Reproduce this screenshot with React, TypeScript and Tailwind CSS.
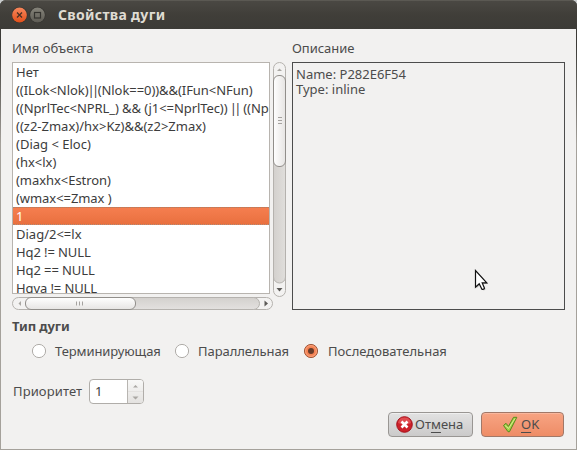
import React from "react";

const SELECTED_ROW = 8;

const rows = [
  { text: "Нет", cls: "" },
  { text: "((ILok<Nlok)||(Nlok==0))&&(IFun<NFun)", cls: "tracking-[-0.06px]" },
  { text: "((NprlTec<NPRL_) && (j1<=NprlTec)) || ((NprlTec", cls: "tracking-[-0.08px]" },
  { text: "((z2-Zmax)/hx>Kz)&&(z2>Zmax)", cls: "" },
  { text: "(Diag < Eloc)", cls: "" },
  { text: "(hx<lx)", cls: "" },
  { text: "(maxhx<Estron)", cls: "tracking-[-0.05px]" },
  { text: "(wmax<=Zmax )", cls: "tracking-[-0.06px]" },
  { text: "1", cls: "" },
  { text: "Diag/2<=lx", cls: "" },
  { text: "Hq2 != NULL", cls: "tracking-[-0.1px]" },
  { text: "Hq2 == NULL", cls: "tracking-[-0.1px]" },
  { text: "Hqva != NULL", cls: "tracking-[-0.1px]" },
];

function RowText({ text }: { text: string }) {
  const [before, after] = text.split("||");
  if (after === undefined) return <>{text}</>;
  return (
    <>
      {before}
      <span className="-ml-px tracking-[-2.6px]">||</span>
      <span className="ml-[1px]">{after}</span>
    </>
  );
}

function TitleBar() {
  return (
    <header className="flex h-[29px] shrink-0 items-center rounded-t-[6px] border-t border-[#5b5953] bg-linear-to-b from-[#4a4843] via-[#403e39] to-[#3c3b37] pl-3">
      <svg width="34" height="17" viewBox="0 0 34 17" className="shrink-0">
        <defs>
          <linearGradient id="close" x1="0" y1="0" x2="0" y2="1">
            <stop offset="0" stopColor="#f7875c" />
            <stop offset="1" stopColor="#e2501b" />
          </linearGradient>
          <linearGradient id="max" x1="0" y1="0" x2="0" y2="1">
            <stop offset="0" stopColor="#85837a" />
            <stop offset="1" stopColor="#5e5c55" />
          </linearGradient>
        </defs>
        <circle cx="7.5" cy="8" r="8" fill="#34332f" />
        <circle cx="25.5" cy="8" r="8" fill="#34332f" />
        <circle cx="7.5" cy="8" r="7.400" fill="url(#close)" />
        <circle cx="25.5" cy="8" r="7.400" fill="url(#max)" />
        <path d="M5 5.500l5 5M10 5.500l-5 5" stroke="#493024" strokeWidth="1.300" />
        <rect x="22.5" y="5.500" width="6" height="5.500" fill="none" stroke="#34332f" strokeWidth="1.200" />
      </svg>
      <h1 className="ml-3 text-[14px] leading-[18px] font-bold tracking-[0.32px] text-[#dfdbd2]">Свойства дуги</h1>
    </header>
  );
}

function ObjectList() {
  return (
    <div className="h-[232px] w-[258px] overflow-hidden border border-[#b8b4af] bg-white text-[#3c3c3c]">
      {rows.map((r, i) => (
        <div
          key={i}
          className={
            i === SELECTED_ROW
              ? "h-[18px] border-y border-dotted border-[#a9836f] bg-linear-to-b from-[#f57e4f] to-[#e9703f] pl-[3px] leading-[16px] whitespace-pre text-white"
              : "h-[18px] pl-[3px] leading-[18px] whitespace-pre"
          }
        >
          <span className={r.cls}>
            <RowText text={r.text} />
          </span>
        </div>
      ))}
    </div>
  );
}

function VerticalScrollbar() {
  return (
    <svg width="14" height="236" viewBox="0 0 14 236" className="block">
      <defs>
        <linearGradient id="vthumb">
          <stop offset="0" stopColor="#fff" />
          <stop offset="1" stopColor="#e6e4e2" />
        </linearGradient>
        <linearGradient id="vtrack">
          <stop offset="0" stopColor="#d3d0cd" />
          <stop offset="1" stopColor="#e0dedb" />
        </linearGradient>
      </defs>
      <rect x=".5" y=".5" width="12" height="234" rx="6" fill="#f3f2f1" stroke="#b5b2ae" />
      <path d="M.5 20h12v195a6 6 0 0 1-12 0z" fill="url(#vtrack)" stroke="#b5b2ae" />
      <rect x=".5" y="13.500" width="12" height="91" rx="5.500" fill="url(#vthumb)" stroke="#918e8a" />
      <path d="M4 9L6.500 6.500L9 9z" fill="#aaa7a3" />
      <path d="M3.500 226h6L6.500 229.500z" fill="#5c5a57" />
      <path d="M5 55.500h4M5 58.500h4M5 61.500h4" stroke="#a5a29f" />
    </svg>
  );
}

function HorizontalScrollbar() {
  return (
    <svg width="262" height="13" viewBox="0 0 262 13" className="block">
      <defs>
        <linearGradient id="hthumb" x2="0" y2="1">
          <stop offset="0" stopColor="#fff" />
          <stop offset="1" stopColor="#e6e4e2" />
        </linearGradient>
        <linearGradient id="htrack" x2="0" y2="1">
          <stop offset="0" stopColor="#d3d0cd" />
          <stop offset="1" stopColor="#e3e1df" />
        </linearGradient>
      </defs>
      <rect x=".5" y=".5" width="260" height="12" rx="6" fill="#f3f2f1" stroke="#b5b2ae" />
      <path d="M100 .5h141.500a6 6 0 0 1 0 12H100z" fill="url(#htrack)" stroke="#b5b2ae" />
      <rect x="13.500" y=".5" width="110" height="12" rx="5.500" fill="url(#hthumb)" stroke="#918e8a" />
      <path d="M9 4L6.500 6.500L9 9z" fill="#aaa7a3" />
      <path d="M252.500 3.500v6L256 6.500z" fill="#5c5a57" />
      <path d="M64.500 4.500v4M67.500 4.500v4M70.500 4.500v4" stroke="#a5a29f" />
    </svg>
  );
}

function Radio({ checked = false }: { checked?: boolean }) {
  return (
    <svg width="16" height="16" viewBox="0 0 16 16" className="shrink-0">
      <circle cx="8" cy="8" r="6.600" fill={checked ? "#f48253" : "#fff"} stroke={checked ? "#a05a3d" : "#b0ada9"} />
      {checked && (
        <>
          <circle cx="8" cy="8" r="5.400" fill="none" stroke="#f9a27d" />
          <circle cx="8" cy="8" r="3" fill="#673b2a" />
        </>
      )}
    </svg>
  );
}

function Pointer() {
  return (
    <svg width="16" height="23" viewBox="0 0 16 23" className="absolute top-[206px] left-[181px]">
      <path
        d="M1.500 1.500v16.700l3.700-3.500 2.600 5.400c1 .5 2.300 0 2.700-.9l-2.300-5.300h4.600z"
        transform="translate(1 1)"
        fill="#000"
        opacity=".25"
      />
      <path d="M1.500 1.500v16.700l3.700-3.500 2.600 5.400c1 .5 2.300 0 2.700-.9l-2.300-5.300h4.600z" fill="#fff" stroke="#111" strokeWidth="1.200" />
    </svg>
  );
}

export default function App() {
  return (
    <div className="h-[450px] w-[577px] bg-[#c9cccd] font-['Noto_Sans','Open_Sans',sans-serif] text-[13px] text-[#4c4c4c]">
      <div className="flex h-full flex-col rounded-t-[6px] bg-linear-to-b from-[#3c3b37] from-[10%] to-[#a5a19b] to-[32%]">
        <TitleBar />
        <main className="mx-px mb-px flex grow flex-col bg-[#f2f1f0] pl-[11px]">
          <div className="flex gap-[5px]">
            <section className="w-[275px]">
              <h2 className="mt-[10px] h-[23px] leading-[18px]">Имя объекта</h2>
              <div className="flex h-[235px] gap-[3px]">
                <ObjectList />
                <VerticalScrollbar />
              </div>
              <HorizontalScrollbar />
            </section>
            <section>
              <h2 className="mt-[10px] h-[23px] leading-[18px] tracking-[-0.05px]">Описание</h2>
              <div className="relative h-[248px] w-[273px] border border-[#4c4c4c] px-[3px] pt-[4px] leading-[15px]">
                <p>Name: P282E6F54</p>
                <p>Type: inline</p>
                <Pointer />
              </div>
            </section>
          </div>
          <h2 className="mt-[7px] leading-[18px] font-bold tracking-[-0.1px]">Тип дуги</h2>
          <div className="mt-[8px] flex h-4 items-center pl-[19px] leading-4">
            <div className="flex w-[143px] items-center gap-2">
              <Radio />
              <span className="tracking-[-0.08px]">Терминирующая</span>
            </div>
            <div className="flex w-[129px] items-center gap-2">
              <Radio />
              <span className="tracking-[-0.06px]">Параллельная</span>
            </div>
            <div className="flex items-center gap-[9px]">
              <Radio checked />
              <span>Последовательная</span>
            </div>
          </div>
          <div className="mt-[20px] flex h-[25px] items-center">
            <span className="w-[77px] pl-px tracking-[0.12px]">Приоритет</span>
            <div className="flex h-[25px] w-[55px] overflow-hidden rounded-[4px] border border-[#b0ada9] bg-white">
              <span className="w-[38px] pl-[5px] leading-[23px] text-[#3c3c3c]">1</span>
              <span className="grow border-l border-[#b8b5b1] bg-linear-to-b from-[#f8f8f7] to-[#e4e2e0]">
                <svg width="15" height="23" viewBox="0 0 15 23">
                  <path d="M5 7.500L7.500 5L10 7.500zM4.500 16.500h6L7.500 19.500z" fill="#aaa7a3" />
                  <path d="M0 11.500h15" stroke="#e4e2e0" />
                </svg>
              </span>
            </div>
          </div>
          <div className="mt-[8px] flex gap-2 pl-[376px]">
            <button className="flex h-[25px] w-[85px] items-center rounded-[4px] border border-[#999693] bg-linear-to-b from-[#e2e2e2] to-[#cbcaca] pl-[7px] shadow-[inset_0_1px_0_#efefef]">
              <svg width="17" height="17" viewBox="0 0 17 17" className="shrink-0">
                <circle cx="8.500" cy="8.500" r="7.800" fill="#cc2029" stroke="#a40f1a" />
                <path d="M2 7a6.600 6.600 0 0 1 13 0q-6 3-13 0" fill="#ec6b6b" opacity=".6" />
                <path d="M5.500 5.500l6 6M11.500 5.500l-6 6" stroke="#fff" strokeWidth="2.600" />
              </svg>
              <span className="ml-[2px]">
                От<span className="underline underline-offset-[3px]">м</span>ена
              </span>
            </button>
            <button className="flex h-[25px] w-[83px] items-center rounded-[4px] border border-[#a17868] bg-linear-to-b from-[#f7a483] to-[#ee8c66] pl-[20px] shadow-[inset_0_1px_0_#f9b79d]">
              <svg width="17" height="17" viewBox="0 0 17 17" className="shrink-0">
                <path d="M1.500 9.500L4 7.300l2.500 3L11.500 1.300h3.300L7.500 15.700H6z" fill="#a6cf45" stroke="#568a1d" strokeLinejoin="round" />
                <path d="M3 9.500l3.500 3L13 2.500" stroke="#d7ed91" fill="none" />
              </svg>
              <span className="ml-[2px]">
                <span className="underline underline-offset-[3px]">O</span>K
              </span>
            </button>
          </div>
        </main>
      </div>
    </div>
  );
}
